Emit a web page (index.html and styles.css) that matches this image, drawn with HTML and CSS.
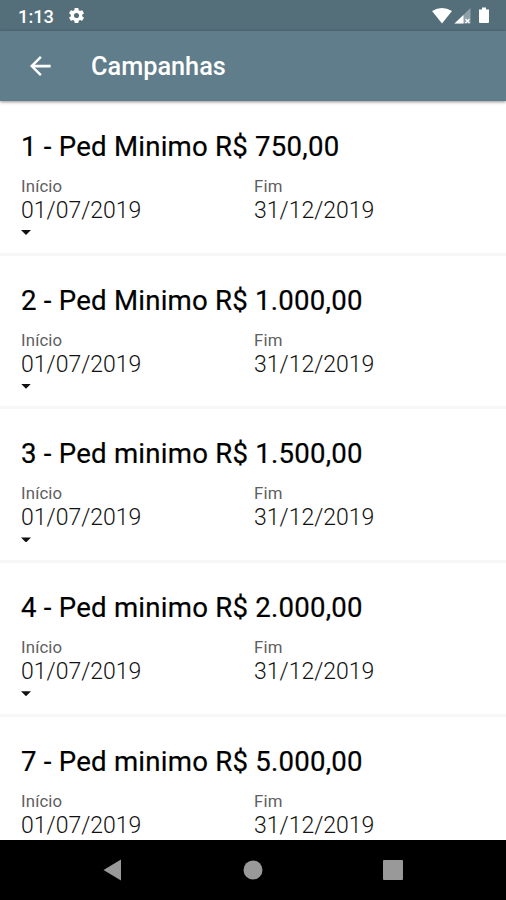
FILE: index.html
```html
<!DOCTYPE html>
<html lang="pt-BR">
<head>
<meta charset="utf-8">
<title>Campanhas</title>
<link rel="stylesheet" href="styles.css">
</head>
<body>
<div class="screen">
  <header class="status">
    <span class="time">1:13</span>
    <svg class="gear" viewBox="0 0 24 24"><path d="M19.14 12.94a7.5 7.5 0 0 0 0-1.88l2.03-1.58a.5.5 0 0 0 .12-.61l-1.92-3.32a.5.5 0 0 0-.59-.22l-2.39.96a7 7 0 0 0-1.62-.94l-.36-2.54A.5.5 0 0 0 13.92 2.4h-3.84a.5.5 0 0 0-.47.41l-.36 2.54a7 7 0 0 0-1.62.94l-2.39-.96a.5.5 0 0 0-.59.22L2.74 8.87a.5.5 0 0 0 .12.61l2.03 1.58a7.5 7.5 0 0 0 0 1.88l-2.03 1.58a.5.5 0 0 0-.12.61l1.92 3.32c.12.22.37.29.59.22l2.39-.96c.5.38 1.03.7 1.62.94l.36 2.54c.05.24.24.41.48.41h3.84c.24 0 .44-.17.47-.41l.36-2.54a7 7 0 0 0 1.62-.94l2.39.96c.22.08.47 0 .59-.22l1.92-3.32a.5.5 0 0 0-.12-.61zM12 15.2a3.2 3.2 0 1 1 0-6.4 3.2 3.2 0 0 1 0 6.4z"/></svg>
    <svg class="indicators" viewBox="0 0 60 20"><path d="M0 5Q10-1 20 5L10 17.500z"/><path opacity=".35" d="M38.500 2v15.500H22.500z"/><path d="M31.500 9v8.500H22.500z"/><path d="M33.500 13l4 4m0-4l-4 4" stroke="#fff" stroke-width="1.300"/><path d="M50 1.500h4v2h3v12.500q0 1-1 1h-8q-1 0-1-1V3.500h3z"/></svg>
  </header>
  <nav class="appbar">
    <svg class="back" viewBox="0 0 24 24"><path d="M20.500 10.900H7.830l5.590-5.490L12 4l-8 8 8 8 1.410-1.410L7.830 13.100H20.500z"/></svg>
    <h1>Campanhas</h1>
  </nav>
  <main>
    <article><h2>1 - Ped Minimo R$ 750,00</h2><dl><div><dt>Início</dt><dd>01/07/2019</dd></div><div><dt>Fim</dt><dd>31/12/2019</dd></div></dl><i class="caret"></i></article>
    <article><h2>2 - Ped Minimo R$ 1.000,00</h2><dl><div><dt>Início</dt><dd>01/07/2019</dd></div><div><dt>Fim</dt><dd>31/12/2019</dd></div></dl><i class="caret"></i></article>
    <article><h2>3 - Ped minimo R$ 1.500,00</h2><dl><div><dt>Início</dt><dd>01/07/2019</dd></div><div><dt>Fim</dt><dd>31/12/2019</dd></div></dl><i class="caret"></i></article>
    <article><h2>4 - Ped minimo R$ 2.000,00</h2><dl><div><dt>Início</dt><dd>01/07/2019</dd></div><div><dt>Fim</dt><dd>31/12/2019</dd></div></dl><i class="caret"></i></article>
    <article><h2>7 - Ped minimo R$ 5.000,00</h2><dl><div><dt>Início</dt><dd>01/07/2019</dd></div><div><dt>Fim</dt><dd>31/12/2019</dd></div></dl></article>
  </main>
  <footer class="navbar">
    <svg viewBox="0 0 24 24"><path d="M20 1.500v21L2.500 12z"/></svg>
    <svg viewBox="0 0 24 24"><circle cx="12" cy="12" r="9.500"/></svg>
    <svg viewBox="0 0 24 24"><rect x="2" y="2" width="20" height="20" rx="1"/></svg>
  </footer>
</div>
</body>
</html>
```
FILE: styles.css
```css
* { box-sizing: border-box; margin: 0; padding: 0; }
body { font-family: Roboto, sans-serif; background: #fff; color: #111; }
.screen { height: 900px; display: flex; flex-direction: column; overflow: hidden; }
.status { height: 31px; flex: none; display: flex; align-items: center; padding: 0 14px 0 18px; background: #546e7a; color: #fff; }
.time { font-size: 18.3px; font-weight: 500; line-height: 31px; padding-top: 1px; width: 49px; }
.gear { width: 19px; height: 19px; fill: #fff; }
.indicators { width: 60px; height: 20px; margin: 1px 0 0 auto; fill: #fff; }
.appbar { height: 70px; flex: none; display: flex; align-items: center; padding-left: 25px; background: #607d8b; color: #fff; box-shadow: 0 1px 3px rgba(0,0,0,.45); z-index: 1; }
.back { width: 30px; height: 30px; fill: #fff; }
h1 { font-size: 25.3px; font-weight: 500; margin-left: 36px; }
main { flex: 1; min-height: 0; overflow: hidden; padding-top: 1px; }
article { height: 153.7px; padding: 28.100px 21px 0; border-bottom: 3px solid #f7f7f7; }
h2 { font-size: 27.6px; font-weight: 400; line-height: 34px; letter-spacing: .23px; white-space: nowrap; color: #000; -webkit-text-stroke: .2px #000; }
dl { display: grid; grid-template-columns: 233px 1fr; margin-top: 12px; }
dt { font-size: 16.8px; line-height: 20px; letter-spacing: .15px; color: #606060; }
dd { font-size: 23px; font-weight: 300; line-height: 28px; padding-top: 1px; color: #111; }
.caret { display: block; width: 10px; height: 5px; margin-top: 5px; background: #111; clip-path: polygon(0 0, 100% 0, 50% 100%); }
.navbar { height: 60px; flex: none; display: flex; justify-content: center; gap: 116px; align-items: center; background: #000; }
.navbar svg { width: 24px; height: 24px; fill: #999; }
```
